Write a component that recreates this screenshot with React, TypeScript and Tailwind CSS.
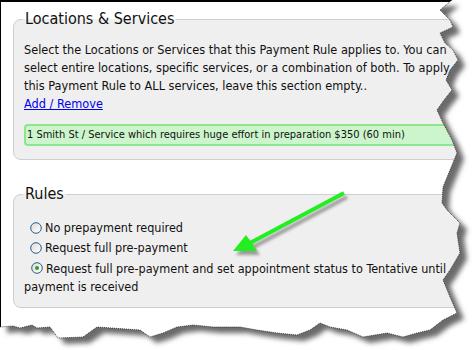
import React from "react";

const paperEdge =
  "0,0 452,0 440,10 450,20 453,27 440,33 445,43 453,50 458,60 450,70 446,80 452,90 444,100 437,110 443,123 452,140 457,153 450,170 443,187 442,203 447,210 460,223 457,233 460,253 450,270 443,280 450,297 457,313 443,320 430,330 417,333 403,337 387,333 363,337 347,330 330,327 320,323 310,330 297,335 277,333 257,330 240,327 213,327 193,325 177,327 163,333 150,337 140,330 97,327 83,337 58,338 50,327 37,328 32,325 20,328 13,326 0,327";

function Radio({ checked }: { checked?: boolean }) {
  return (
    <svg width="12" height="12" viewBox="0 0 12 12" className="inline-block align-[-1px]">
      <defs>
        <linearGradient id={checked ? "rg1" : "rg0"} x1="0" y1="0" x2="1" y2="1">
          <stop offset="0" stopColor="#dcdcd4" />
          <stop offset="1" stopColor="#ffffff" />
        </linearGradient>
      </defs>
      <circle cx="6" cy="6" r="5.3" fill={`url(#${checked ? "rg1" : "rg0"})`} stroke="#2d5c8c" strokeWidth="1" />
      {checked && <circle cx="6" cy="6" r="2" fill="#26a326" />}
    </svg>
  );
}

export default function App() {
  return (
    <div className="relative w-[472px] h-[350px] bg-white overflow-hidden font-['DejaVu_Sans_Condensed','DejaVu_Sans',sans-serif] [font-stretch:condensed] text-[#111]">
      <div className="h-[327px] border-t-2 border-l border-black pl-3 pt-[7px]">
        <fieldset className="w-[470px] border border-[#cfcfcf] rounded-lg bg-[#efefef] pl-[10px] pt-[12px] pb-[13px]">
          <legend className="-ml-[1px] px-[2px] text-[16px] leading-[20px] text-[#111]">Locations &amp; Services</legend>
          <div className="text-[12.6px] leading-[18px] whitespace-nowrap">
            Select the Locations or Services that this Payment Rule applies to. You can
            <br />
            select entire locations, specific services, or a combination of both. To apply
            <br />
            this Payment Rule to ALL services, leave this section empty..
            <br />
            <a href="#" className="text-[#0000ee] underline">Add / Remove</a>
          </div>
          <div className="mt-[11px] h-[22px] border-2 border-[#8ee58e] rounded bg-[#ccf5cc] pl-[1px] text-[11px] leading-[18px] whitespace-nowrap">
            1 Smith St / Service which requires huge effort in preparation $350 (60 min)
          </div>
        </fieldset>

        <fieldset className="mt-[24px] w-[470px] border border-[#cfcfcf] rounded-lg bg-[#efefef] pl-[10px] pt-[14px] pb-[11px]">
          <legend className="-ml-[1px] px-[2px] text-[16px] leading-[20px] text-[#111]">Rules</legend>
          <div className="text-[12.5px] leading-[20px] whitespace-nowrap">
            <div className="flex items-center">
              <span className="ml-[6px] mr-[3px] flex"><Radio /></span>
              No prepayment required
            </div>
            <div className="flex items-center">
              <span className="ml-[6px] mr-[3px] flex"><Radio /></span>
              Request full pre-payment
            </div>
            <div className="leading-[18px] pt-[2px]">
              <span className="ml-[7px] mr-[3px]"><Radio checked /></span>
              Request full pre-payment and set appointment status to Tentative until
              <br />
              payment is received
            </div>
          </div>
        </fieldset>
      </div>

      <svg className="absolute left-0 top-0" width="472" height="350" viewBox="0 0 472 350">
        <defs>
          <clipPath id="outside">
            <path d={`M472,0 L${paperEdge.split(" ").slice(1).join(" L")} L0,350 L472,350 Z`} />
          </clipPath>
          <filter id="blur" x="-10%" y="-10%" width="120%" height="120%">
            <feGaussianBlur stdDeviation="2.5" />
          </filter>
          <filter id="ashadow" x="-20%" y="-20%" width="140%" height="140%">
            <feGaussianBlur stdDeviation="1.5" />
          </filter>
        </defs>
        <path d={`M472,0 L${paperEdge.split(" ").slice(1).join(" L")} L0,350 L472,350 Z`} fill="#ffffff" />
        <g clipPath="url(#outside)">
          <polygon points={paperEdge} fill="#6a6a6a" transform="translate(7,6)" filter="url(#blur)" />
        </g>
        <polyline
          points={paperEdge.split(" ").slice(1).join(" ")}
          fill="none"
          stroke="#222"
          strokeWidth="0.8"
          strokeDasharray="1 1"
        />

        <g opacity="0.55" filter="url(#ashadow)" transform="translate(3,4)">
          <line x1="344" y1="193" x2="250" y2="243" stroke="#555" strokeWidth="4" />
          <polygon points="233,251 246,235 257,251" fill="#555" />
        </g>
        <line x1="344" y1="193" x2="250" y2="243" stroke="#22ee22" strokeWidth="4" />
        <polygon points="233,251 246,235 257,251" fill="#22ee22" />
      </svg>
    </div>
  );
}
